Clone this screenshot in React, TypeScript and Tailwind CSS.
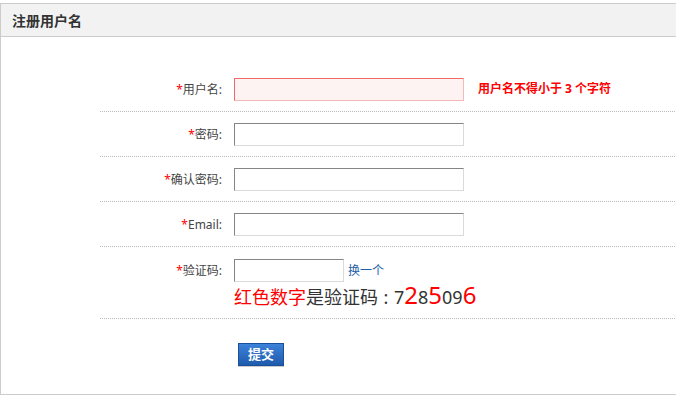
import React from 'react';

const font = "font-['Noto_Sans','Noto_Sans_CJK_SC',sans-serif]";

function Label({ text }: { text: string }) {
  return (
    <div className="w-[134px] shrink-0 pr-[12px] text-right text-[12px] leading-[23px] text-[#444]">
      <span className="text-[#f00]">*</span>
      {text}:
    </div>
  );
}

function Field({ label, error }: { label: string; error?: string }) {
  return (
    <div className="flex h-[45px] items-center border-b border-dotted border-[#bbb]">
      <Label text={label} />
      <input
        className={
          error
            ? 'h-[23px] w-[230px] border border-t-[#f06a6a] border-l-[#f06a6a] border-b-[#f7b8b8] border-r-[#f7b8b8] bg-[#fdf3f3] outline-none'
            : 'h-[23px] w-[230px] border border-t-[#858585] border-l-[#858585] border-b-[#dadada] border-r-[#dadada] bg-white outline-none'
        }
      />
      {error && <span className="ml-[14px] text-[12px] font-bold text-[#f00]">{error}</span>}
    </div>
  );
}

export default function App() {
  return (
    <div className={`h-[403px] w-[676px] overflow-hidden bg-white pt-[3px] ${font}`}>
      <div className="h-[392px] w-[700px] border border-[#ccc]">
        {/* Header */}
        <div className="flex h-[33px] items-center border-b border-[#ccc] bg-[#f2f2f2] pl-[11px] text-[14px] font-bold text-[#333]">
          注册用户名
        </div>

        <div className="pl-[99px] pt-[30px]">
          <Field label="用户名" error="用户名不得小于 3 个字符" />
          <Field label="密码" />
          <Field label="确认密码" />
          <Field label="Email" />

          {/* Captcha */}
          <div className="flex h-[72px] items-start border-b border-dotted border-[#bbb] pt-[12px]">
            <Label text="验证码" />
            <div className="flex flex-col">
              <div className="flex items-center">
                <input className="h-[23px] w-[110px] border border-t-[#858585] border-l-[#858585] border-b-[#dadada] border-r-[#dadada] bg-white outline-none" />
                <a className="ml-[4px] text-[12px] leading-[23px] text-[#1f5fa8]">换一个</a>
              </div>
              <div className="mt-[1px] whitespace-nowrap text-[18px] leading-[24px] text-[#333]">
                <span className="text-[#f00]">红色数字</span>是验证码
                <span className="inline-block w-[16px] text-center">:</span>
                <span>7</span>
                <span className="text-[24px] text-[#f00]">2</span>
                <span>8</span>
                <span className="text-[24px] text-[#f00]">5</span>
                <span>09</span>
                <span className="text-[24px] text-[#f00]">6</span>
              </div>
            </div>
          </div>

          <div className="pl-[138px] pt-[22px]">
            <button className="h-[23px] w-[46px] border border-[#1a4f99] bg-gradient-to-b from-[#3b82d8] to-[#1f5bad] text-[13px] font-bold leading-[21px] text-white shadow-[0_1px_0_#ccc]">
              提交
            </button>
          </div>
        </div>
      </div>
    </div>
  );
}
